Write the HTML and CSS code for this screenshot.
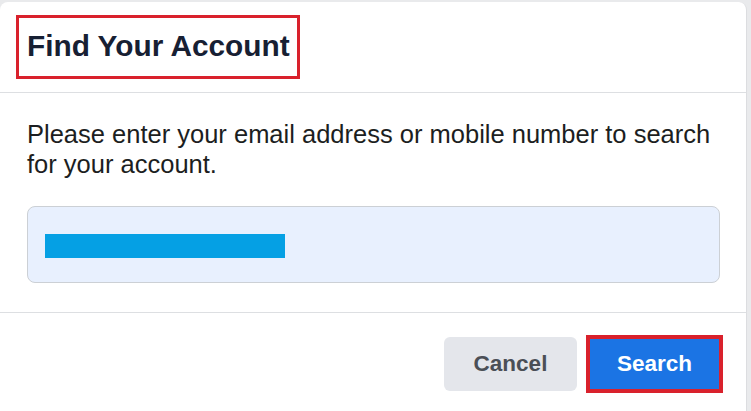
FILE: index.html
```html
<!DOCTYPE html>
<html lang="en">
<head>
<meta charset="utf-8">
<title>Find Your Account</title>
<link rel="stylesheet" href="styles.css">
</head>
<body>
<div class="card">
  <div class="card-header">
    <h2 class="title"><span class="mark">Find Your Account</span></h2>
  </div>
  <div class="card-body">
    <p class="hint">Please enter your email address or mobile number to search for your account.</p>
    <div class="field"><span class="redacted"></span></div>
  </div>
  <div class="card-footer">
    <button class="btn btn-cancel">Cancel</button>
    <button class="btn btn-search">Search</button>
  </div>
</div>
</body>
</html>
```
FILE: styles.css
```css
html, body {
  margin: 0;
  padding: 0;
}
body {
  background: #e9eaec;
  font-family: "Liberation Sans", Arial, sans-serif;
  overflow: hidden;
  height: 411px;
}
.card {
  margin-top: 2px;
  width: 747px;
  height: 420px;
  background: #fff;
  border-right: 1px solid #dcdde0;
  border-radius: 8px;
  box-sizing: border-box;
}
.card-header {
  padding: 13px 16px 13px 16px;
  border-bottom: 1px solid #dddfe2;
}
.title {
  margin: 0;
  font-size: 29.8px;
  line-height: 34px;
  font-weight: bold;
  color: #172033;
}
.mark {
  display: inline-block;
  border: 3px solid #d9212c;
  padding: 11px 7px 13px 8px;
}
.card-body {
  padding: 26px 26px 29px 27px;
  border-bottom: 1px solid #dddfe2;
}
.hint {
  margin: 0 0 27px 0;
  font-size: 25.5px;
  line-height: 30px;
  color: #1c1e21;
}
.field {
  box-sizing: border-box;
  height: 77px;
  background: #e8f0fe;
  border: 1px solid #ccd0d5;
  border-radius: 8px;
  padding: 3px 17px 0 17px;
  display: flex;
  align-items: center;
}
.redacted {
  display: block;
  width: 240px;
  height: 24px;
  background: #05a0e4;
}
.card-footer {
  padding: 24px 25px 0 0;
  display: flex;
  justify-content: flex-end;
  gap: 11px;
}
.btn {
  width: 133px;
  height: 54px;
  border: none;
  border-radius: 6px;
  font-family: "Liberation Sans", Arial, sans-serif;
  font-size: 22.5px;
  font-weight: bold;
  padding: 0;
}
.btn-cancel {
  background: #e4e6eb;
  color: #4b4f56;
}
.btn-search {
  background: #1b74e4;
  color: #fff;
  border-radius: 0;
  outline: 4px solid #d9212c;
  outline-offset: -2px;
}
```
